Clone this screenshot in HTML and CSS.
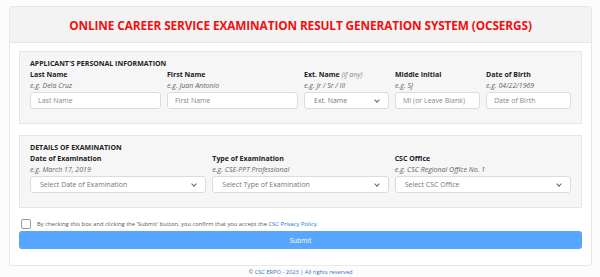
FILE: index.html
```html
<!DOCTYPE html>
<html lang="en">

<head>
    <meta charset="UTF-8">
    <meta name="viewport" content="width=device-width, initial-scale=1.0">
    <title>OCSERGS</title>
    <link rel="stylesheet" href="styles.css">
</head>

<body>
    <div class="card">
        <div class="card-header">
            <h1>ONLINE CAREER SERVICE EXAMINATION RESULT GENERATION SYSTEM (OCSERGS)</h1>
        </div>

        <div class="card-body">
            <div class="seccion">
                <h2>APPLICANT'S PERSONAL INFORMATION</h2>
                <div class="fila personal">
                    <div class="campo">
                        <label for="ape">Last Name</label>
                        <span class="ej">e.g. Dela Cruz</span>
                        <input type="text" id="ape" placeholder="Last Name">
                    </div>
                    <div class="campo">
                        <label for="nombre">First Name</label>
                        <span class="ej">e.g. Juan Antonio</span>
                        <input type="text" id="nombre" placeholder="First Name">
                    </div>
                    <div class="campo">
                        <label for="ext">Ext. Name <i>(if any)</i></label>
                        <span class="ej">e.g. Jr / Sr / III</span>
                        <div class="select">Ext. Name</div>
                    </div>
                    <div class="campo">
                        <label for="mi">Middle Initial</label>
                        <span class="ej">e.g. SJ</span>
                        <input type="text" id="mi" placeholder="MI (or Leave Blank)">
                    </div>
                    <div class="campo">
                        <label for="nacim">Date of Birth</label>
                        <span class="ej">e.g. 04/22/1969</span>
                        <input type="text" id="nacim" placeholder="Date of Birth">
                    </div>
                </div>
            </div>

            <div class="seccion">
                <h2>DETAILS OF EXAMINATION</h2>
                <div class="fila examen">
                    <div class="campo">
                        <label>Date of Examination</label>
                        <span class="ej">e.g. March 17, 2019</span>
                        <div class="select">Select Date of Examination</div>
                    </div>
                    <div class="campo">
                        <label>Type of Examination</label>
                        <span class="ej">e.g. CSE-PPT Professional</span>
                        <div class="select">Select Type of Examination</div>
                    </div>
                    <div class="campo">
                        <label>CSC Office</label>
                        <span class="ej">e.g. CSC Regional Office No. 1</span>
                        <div class="select">Select CSC Office</div>
                    </div>
                </div>
            </div>

            <div class="acepto">
                <span class="check"></span>
                <p>By checking this box and clicking the 'Submit' button, you confirm that you accept the <a href="#">CSC Privacy Policy</a>.</p>
            </div>
            <button id="enviar">Submit</button>
        </div>
    </div>

    <p class="pie">&copy; CSC ERPO - 2023 | All rights reserved</p>
</body>

</html>
```

FILE: styles.css
```css
* {
    box-sizing: border-box;
    padding: 0;
    margin: 0;
}

body {
    font-family: "Open Sans", sans-serif;
    background-color: #fcfcfc;
    color: #222;
    padding: 6px 8px 0 9px;
}

.card {
    background-color: white;
    border: 1px solid #e8e8e8;
    border-radius: 3px;
}

.card-header {
    background-color: #f3f3f3;
    border-bottom: 1px solid #e6e6e6;
    height: 36px;
    display: flex;
    align-items: center;
    justify-content: center;
}

.card-header h1 {
    color: #f01010;
    font-size: 11.8px;
    font-weight: 700;
    letter-spacing: -0.1px;
}

.card-body {
    padding: 8px 9px 16px 9px;
}

.seccion {
    background-color: #f6f6f6;
    border: 1px solid #e6e6e6;
    padding: 6px 10px 14px 10px;
    margin-bottom: 11px;
}

.seccion h2 {
    font-size: 7px;
    font-weight: 700;
    line-height: 11px;
}

.fila {
    display: grid;
    gap: 6px;
}

.personal {
    grid-template-columns: 131px 131px 85px 85px 85px;
}

.examen {
    grid-template-columns: 1fr 1fr 1fr;
}

.campo {
    display: flex;
    flex-direction: column;
}

label {
    font-size: 7px;
    font-weight: 700;
    line-height: 11px;
}

label i {
    font-weight: 400;
    color: #888;
}

.ej {
    font-size: 7px;
    font-style: italic;
    color: #666;
    line-height: 12px;
}

input,
.select {
    height: 17px;
    background-color: white;
    border: 1px solid #dcdcdc;
    border-radius: 3px;
    font-family: "Open Sans", sans-serif;
    font-size: 7px;
    padding: 0 7px;
    color: #777;
}

input::placeholder {
    color: #888;
}

.select {
    display: flex;
    align-items: center;
    justify-content: space-between;
    padding-left: 9px;
}

.select::after {
    content: "";
    width: 3px;
    height: 3px;
    border-right: 1px solid #666;
    border-bottom: 1px solid #666;
    transform: rotate(45deg);
    margin: 0 2px 2px 0;
}

.acepto {
    display: flex;
    align-items: center;
    gap: 6px;
    padding-left: 2px;
}

.check {
    width: 10px;
    height: 10px;
    border: 1px solid #999;
    border-radius: 2px;
    background-color: white;
}

.acepto p {
    font-size: 5.8px;
    color: #555;
}

.acepto a {
    color: #2a6fd8;
    text-decoration: none;
}

button {
    display: block;
    width: 100%;
    height: 18px;
    margin-top: 2px;
    background-color: #58a6ff;
    color: white;
    font-family: "Open Sans", sans-serif;
    font-size: 6.5px;
    border: none;
    border-radius: 3px;
    cursor: pointer;
}

.pie {
    text-align: center;
    font-size: 5.7px;
    color: #3d6fbf;
    margin-top: 2px;
}
```
